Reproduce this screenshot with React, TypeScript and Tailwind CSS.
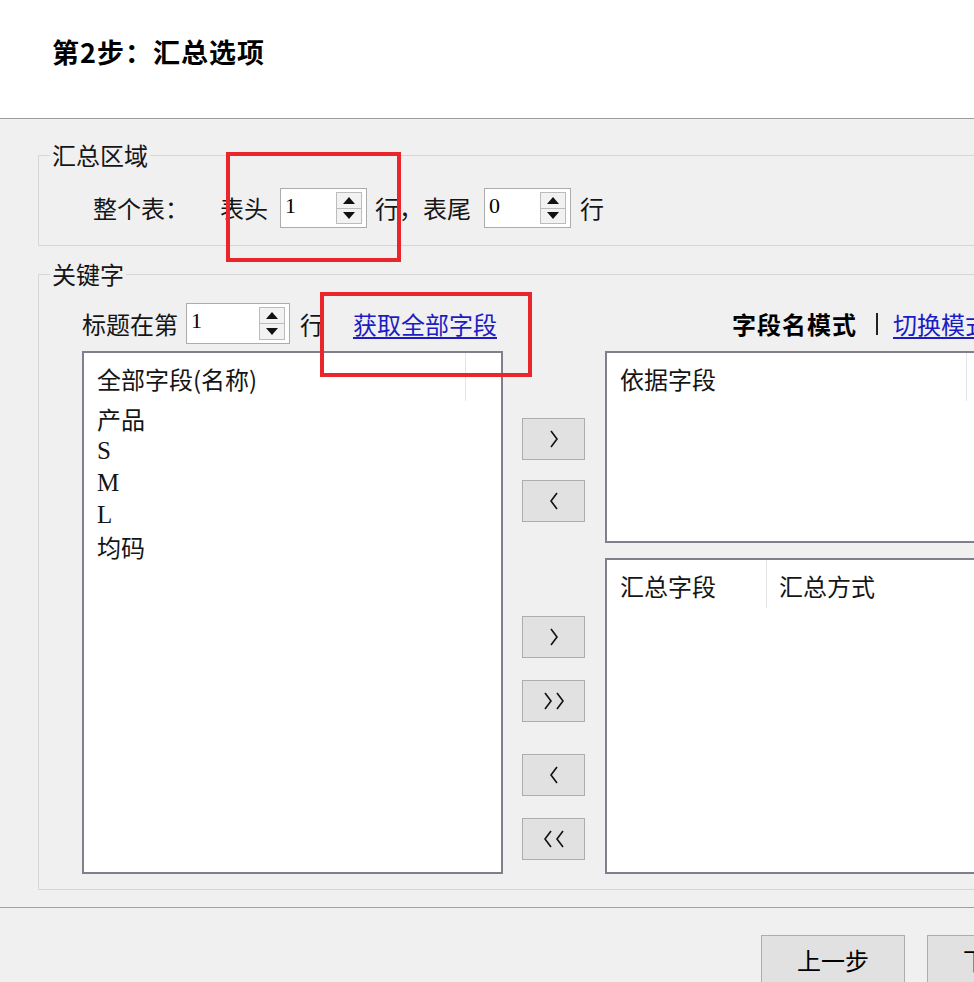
import type { ReactNode } from 'react';

type SpinProps = {
  value: string;
  width: string;
  height: string;
};

function SpinBox({ value, width, height }: SpinProps) {
  return (
    <div className={`flex items-stretch border border-[#acacac] bg-white ${width} ${height}`}>
      <span className="flex-1 pl-[4px] pt-[2px] font-['Liberation_Serif',serif] text-[22px] leading-[30px] text-black">
        {value}
      </span>
      <div className="my-[3px] mr-[4px] flex w-[26px] flex-col border border-[#bcbcbc]">
        <div className="flex flex-1 items-center justify-center border-b border-[#bcbcbc] bg-[#f2f2f2]">
          <svg width="12" height="7" viewBox="0 0 12 7">
            <polygon points="6,0 12,7 0,7" fill="#111" />
          </svg>
        </div>
        <div className="flex flex-1 items-center justify-center bg-[#f2f2f2]">
          <svg width="12" height="7" viewBox="0 0 12 7">
            <polygon points="0,0 12,0 6,7" fill="#111" />
          </svg>
        </div>
      </div>
    </div>
  );
}

function Chevron({ dir }: { dir: 'left' | 'right' }) {
  return (
    <svg width="10" height="18" viewBox="0 0 10 18">
      <polyline
        points={dir === 'right' ? '2,1 8,9 2,17' : '8,1 2,9 8,17'}
        fill="none"
        stroke="#111"
        strokeWidth="1.6"
      />
    </svg>
  );
}

function MoveButton({ children, className }: { children: ReactNode; className: string }) {
  return (
    <button
      type="button"
      className={`flex h-[42px] w-[63px] items-center justify-center gap-[2px] border border-[#adadad] bg-[#e1e1e1] ${className}`}
    >
      {children}
    </button>
  );
}

const fields = ['产品', 'S', 'M', 'L', '均码'];

export default function App() {
  return (
    <div className="relative h-[982px] w-[974px] overflow-hidden bg-[#f0f0f0] font-['Noto_Sans_CJK_SC',sans-serif] text-[#151515]">
      <div className="h-[119px] border-b border-[#9c9c9c] bg-white pl-[52px] pt-[36px]">
        <h1 className="text-[27px] font-bold leading-[32px] tracking-[1px] text-black">第2步：汇总选项</h1>
      </div>

      <fieldset className="ml-[38px] mt-[22px] w-[960px] border border-[#d6d6d6]">
        <legend className="ml-[11px] px-[2px] text-[24px] leading-[28px]">汇总区域</legend>
        <div className="flex items-center pb-[17px] pl-[54px] pt-[19px] text-[24px] leading-[28px]">
          <span>整个表：</span>
          <span className="ml-[31px]">表头</span>
          <div className="ml-[12px]">
            <SpinBox value="1" width="w-[87px]" height="h-[40px]" />
          </div>
          <span className="ml-[8px]">行，表尾</span>
          <div className="ml-[13px]">
            <SpinBox value="0" width="w-[87px]" height="h-[40px]" />
          </div>
          <span className="ml-[9px]">行</span>
        </div>
      </fieldset>

      <fieldset className="ml-[38px] mt-[14px] w-[960px] border border-[#d6d6d6]">
        <legend className="ml-[11px] px-[2px] text-[24px] leading-[28px]">关键字</legend>
        <div className="pb-[15px] pl-[43px] pt-[15px]">
          <div className="flex h-[41px] items-center whitespace-nowrap text-[24px] leading-[28px]">
            <span>标题在第</span>
            <div className="ml-[8px]">
              <SpinBox value="1" width="w-[104px]" height="h-[41px]" />
            </div>
            <span className="ml-[10px]">行</span>
            <a href="#" className="ml-[29px] text-[#1c1cc4] underline underline-offset-[3px]">
              获取全部字段
            </a>
            <span className="ml-[235px] font-bold tracking-[1px] text-black">字段名模式</span>
            <span className="ml-[19px] h-[22px] w-[2px] bg-[#222]" />
            <a href="#" className="ml-[15px] text-[#1c1cc4] underline underline-offset-[3px]">
              切换模式
            </a>
          </div>

          <div className="mt-[7px] flex items-start text-[24px]">
            <div className="h-[523px] w-[421px] border-2 border-[#80808c] bg-white">
              <div className="flex h-[48px]">
                <div className="w-[382px] border-r border-[#e4e4e4] pl-[13px] pt-[12px] leading-[28px]">
                  全部字段(名称)
                </div>
              </div>
              <ul className="pt-[2px]">
                {fields.map(f => (
                  <li
                    key={f}
                    className={`pl-[13px] leading-[32px] ${f.length === 1 ? "font-['Liberation_Serif',serif] text-[25px]" : ''}`}
                  >
                    {f}
                  </li>
                ))}
              </ul>
            </div>

            <div className="ml-[19px] flex flex-col">
              <MoveButton className="mt-[67px]">
                <Chevron dir="right" />
              </MoveButton>
              <MoveButton className="mt-[20px]">
                <Chevron dir="left" />
              </MoveButton>
              <MoveButton className="mt-[94px]">
                <Chevron dir="right" />
              </MoveButton>
              <MoveButton className="mt-[22px]">
                <Chevron dir="right" />
                <Chevron dir="right" />
              </MoveButton>
              <MoveButton className="mt-[32px]">
                <Chevron dir="left" />
              </MoveButton>
              <MoveButton className="mt-[22px]">
                <Chevron dir="left" />
                <Chevron dir="left" />
              </MoveButton>
            </div>

            <div className="ml-[20px] flex flex-col">
              <div className="h-[192px] w-[380px] border-2 border-[#80808c] bg-white">
                <div className="flex h-[48px]">
                  <div className="w-[360px] border-r border-[#e4e4e4] pl-[13px] pt-[12px] leading-[28px]">依据字段</div>
                </div>
              </div>
              <div className="mt-[15px] h-[316px] w-[380px] border-2 border-[#80808c] bg-white">
                <div className="flex h-[48px]">
                  <div className="w-[160px] border-r border-[#e4e4e4] pl-[13px] pt-[12px] leading-[28px]">汇总字段</div>
                  <div className="pl-[12px] pt-[12px] leading-[28px]">汇总方式</div>
                </div>
              </div>
            </div>
          </div>
        </div>
      </fieldset>

      <div className="mt-[17px] border-t border-[#a0a0a0] pt-[27px]">
        <div className="flex whitespace-nowrap">
          <button
            type="button"
            className="ml-[761px] h-[50px] w-[144px] shrink-0 border border-[#adadad] bg-[#e1e1e1] text-[24px] leading-[28px] text-black"
          >
            上一步
          </button>
          <button
            type="button"
            className="ml-[22px] h-[50px] w-[144px] shrink-0 border border-[#adadad] bg-[#e1e1e1] text-[24px] leading-[28px] text-black"
          >
            下一步
          </button>
        </div>
      </div>

      <div className="absolute left-[226px] top-[152px] h-[110px] w-[175px] border-[4px] border-[#e8262b]" />
      <div className="absolute left-[320px] top-[292px] h-[85px] w-[212px] border-[4px] border-[#e8262b]" />
    </div>
  );
}
